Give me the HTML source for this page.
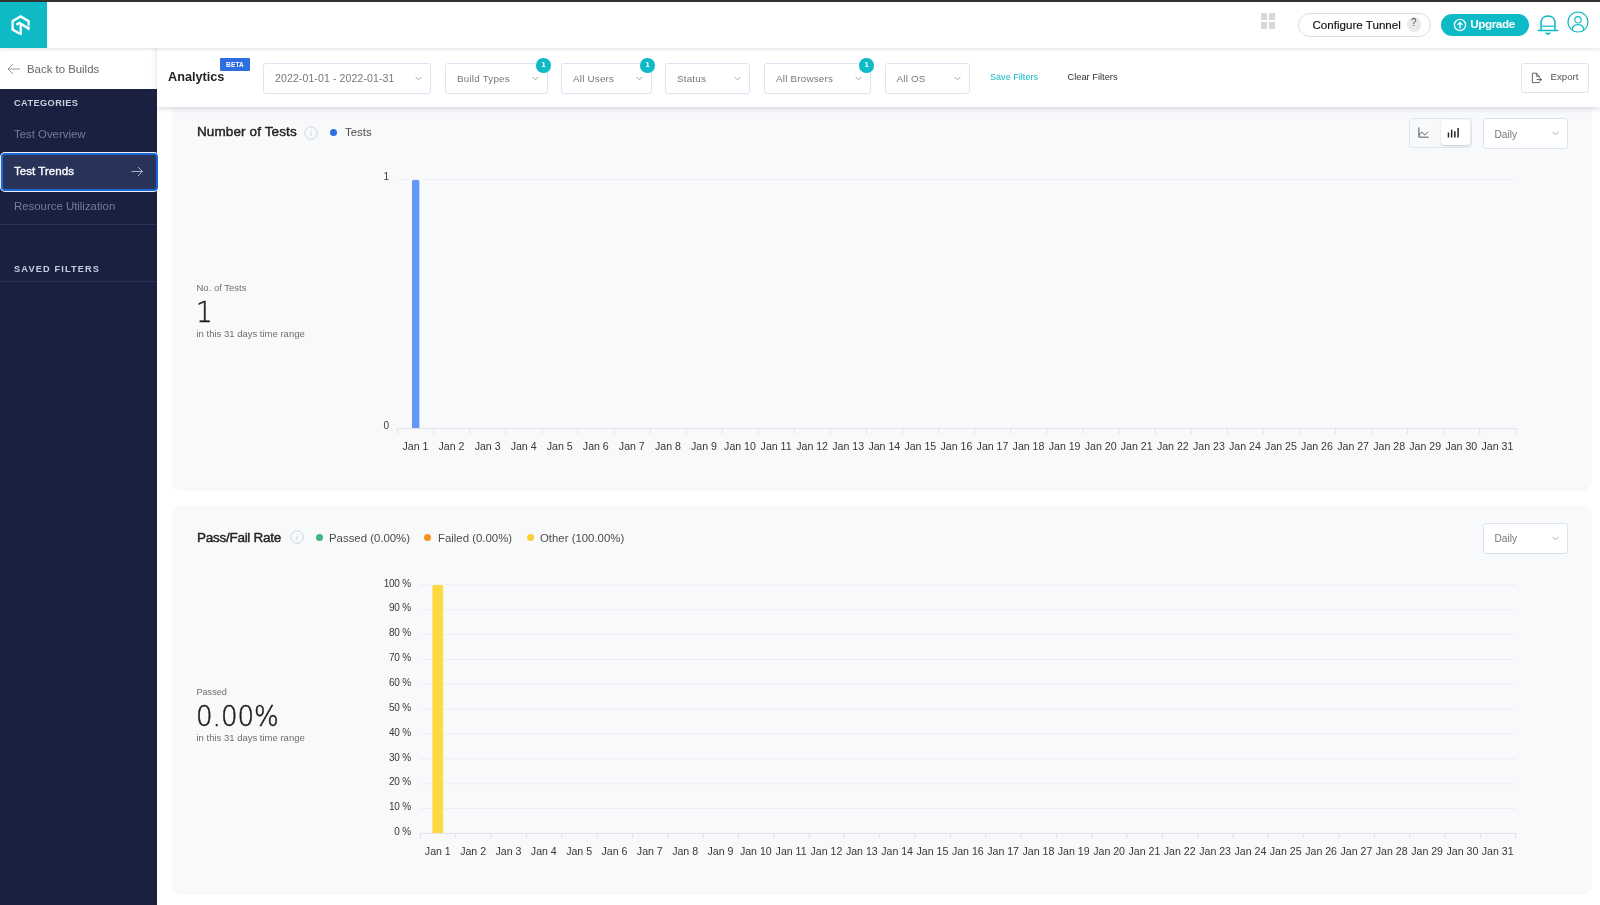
<!DOCTYPE html>
<html lang="en">
<head>
<meta charset="utf-8">
<title>Analytics - Test Trends</title>
<style>
*{box-sizing:border-box;margin:0;padding:0}
html,body{width:1600px;height:905px;overflow:hidden;background:#fff;font-family:"Liberation Sans",sans-serif;color:#333}
#wrap{position:absolute;left:0;top:0;width:1600px;height:905px;will-change:transform}
.abs{position:absolute}
#topline{left:0;top:0;width:1600px;height:2px;background:#333}
#header{left:0;top:2px;width:1600px;height:46px;background:#fff;box-shadow:0 1px 4px rgba(0,0,0,.12);z-index:5}
#logo{left:0;top:0;width:47px;height:46px;background:#0ebac5}
#sidebar{left:0;top:48px;width:157px;height:857px;background:#1a2140;z-index:3}
#back{left:0;top:0;width:157px;height:41px;background:#fff;box-shadow:inset -7px 0 6px -5px rgba(0,0,0,.05);border-right:1px solid #efefef}
#back span{position:absolute;left:27px;top:14.5px;font-size:11.4px;color:#666}
.sb-h{position:absolute;left:14px;font-size:9.2px;font-weight:bold;letter-spacing:.42px;color:#c9cede}
.sb-i{position:absolute;left:14px;font-size:11.4px;color:#747c97}
.sb-line{position:absolute;left:0;width:157px;height:1px;background:#2a3357}
#active{left:.5px;top:105px;width:157.5px;height:38px;background:#283359;border:2px solid #1967d8;border-radius:4px;box-shadow:0 0 0 1px rgba(255,255,255,.92)}
#active span{position:absolute;left:11.5px;top:9px;font-size:11.6px;color:#fff;-webkit-text-stroke:.35px #fff}
#fbar{left:157px;top:48px;width:1443px;height:58.5px;background:#fff;box-shadow:0 2px 5px rgba(30,45,80,.16);z-index:2}
.sel{position:absolute;top:14.5px;height:31.5px;border:1px solid #dde4f1;border-radius:3px;background:#fff;font-size:9.8px;letter-spacing:.22px;color:#777;line-height:29.6px;padding-left:11px;white-space:nowrap}
.badge{position:absolute;width:14.4px;height:14.4px;border-radius:50%;background:#0ebac5;color:#fff;font-size:7.5px;text-align:center;line-height:14.4px;font-weight:bold;margin:.3px 0 0 .3px}
.card{position:absolute;left:172px;width:1420px;background:#f8f9fb;border-radius:10px;z-index:1}
#tunnel{left:1298px;top:11.25px;width:133.25px;height:23.5px;border:1.2px solid #dcdedf;border-radius:12px;background:#fff}
#tunnel span{position:absolute;left:13.5px;top:3.5px;font-size:11.6px;color:#111;-webkit-text-stroke:.15px #111}
#tunnel i{position:absolute;left:107.5px;top:3px;width:14.5px;height:14.5px;border-radius:50%;background:#e9e9e9;font-style:normal;font-size:10px;line-height:12.5px;text-align:center;color:#555}
#upgrade{left:1440.5px;top:11.6px;width:88px;height:22.6px;border-radius:12px;background:#0ebac5}
#upgrade svg{position:absolute;left:12px;top:4.2px}
#upgrade span{position:absolute;left:29.7px;top:3.8px;font-size:11.7px;letter-spacing:-.4px;color:#fff;font-weight:bold}
.chev{position:absolute;right:8px;top:12.4px}
#atitle{left:11px;top:21.5px;font-size:12.7px;font-weight:bold;color:#222}
#beta{left:63px;top:10px;width:30px;height:13px;background:#2f6ee0;color:#fff;font-size:6.5px;font-weight:bold;text-align:center;line-height:13px;border-radius:1px;letter-spacing:.2px}
#savef{left:833px;top:24.1px;font-size:9.1px;color:#0ebac5}
#clearf{left:910.5px;top:24.1px;font-size:9.3px;color:#333}
#export{left:1364px;top:15px;width:68px;height:30px;border:1px solid #dfe5f0;border-radius:3px;background:#fff}
#export svg{position:absolute;left:8.5px;top:7.7px}
#export span{position:absolute;left:28.5px;top:7.2px;font-size:9.7px;color:#555}
.ctitle{position:absolute;font-size:13.5px;letter-spacing:.12px;color:#222;white-space:nowrap;-webkit-text-stroke:.42px #222}
.dot{position:absolute;width:7px;height:7px;border-radius:50%}
.leg{position:absolute;font-size:11.4px;color:#4c4c4c;white-space:nowrap}
.slab{position:absolute;font-size:9.5px;color:#6e6e6e;white-space:nowrap}
.sbig{position:absolute;font-family:"DejaVu Sans","Liberation Sans",sans-serif;font-weight:200;font-size:27.6px;color:#1c1c1c;white-space:nowrap;-webkit-text-stroke:.5px #1c1c1c;transform:scaleX(.945);transform-origin:0 0}
.sel2{position:absolute;width:84.5px;height:31.5px;border:1px solid #dbe2f0;border-radius:3px;background:#fff;font-size:10.1px;color:#777;line-height:31.9px;padding-left:10.5px}
.sel2 .chev{right:8px;top:12px}
#toggle{left:1237px;top:18px;width:63px;height:29.5px;border:1px solid #dfe5f0;border-radius:4px}
#tgl-a{left:30.7px;top:1.2px;width:29.6px;height:25px;background:#fff;border-radius:3.5px;box-shadow:0 1px 2px rgba(0,0,0,.2)}
</style>
</head>
<body>
<div id="wrap">
<div class="abs" id="topline"></div>
<div class="abs" id="header">
  <div class="abs" id="logo">
    <svg class="abs" style="left:0;top:0" width="47" height="46" viewBox="0 0 47 46" fill="none" stroke="#fff" stroke-width="2.4" stroke-linejoin="miter">
      <path d="M28.6 23.4V19.1L20.6 14.5L12.6 19.1V27.6L19.4 31.5"/>
      <path d="M20.7 33V23"/>
      <path d="M16.4 22.7L19.4 21L29.2 26.9"/>
      <path d="M28.7 28.2V24.4" stroke-width="1.6"/>
    </svg>
  </div>
  <svg class="abs" style="left:1261px;top:11px" width="15" height="16" viewBox="0 0 15 16"><g fill="#d6d8d9"><path d="M0 0H4.6Q6.1 0 6.1 1.5V7H0Z"/><path d="M14.1 0H9.5Q8 0 8 1.5V7H14.1Z"/><path d="M0 15.9H4.6Q6.1 15.9 6.1 14.4V8.9H0Z"/><path d="M14.1 15.9H9.5Q8 15.9 8 14.4V8.9H14.1Z"/></g></svg>
  <div class="abs" id="tunnel"><span>Configure Tunnel</span><i>?</i></div>
  <div class="abs" id="upgrade"><svg width="14" height="14" viewBox="0 0 14 14" fill="none" stroke="#fff" stroke-width="1.3"><circle cx="7" cy="7" r="5.6"/><path d="M7 10V4.6M4.8 6.6L7 4.4L9.2 6.6" stroke-linecap="round" stroke-linejoin="round"/></svg><span>Upgrade</span></div>
  <svg class="abs" style="left:1537px;top:10.5px" width="22" height="24" viewBox="0 0 22 24" fill="none" stroke="#0ebac5" stroke-width="1.5"><path d="M4 17.5V10C4 5.4 7 2.9 11 2.9S18 5.4 18 10V17.5"/><path d="M4 13.2H18" stroke-width="1.2"/><path d="M1.2 17.6H20.8" stroke-linecap="round"/><path d="M8.6 20.2H13.4Q11 22.8 8.6 20.2Z" fill="#0ebac5" stroke-width="1"/></svg>
  <svg class="abs" style="left:1567.25px;top:8.5px" width="22" height="22" viewBox="0 0 22 22" fill="none" stroke="#0ebac5" stroke-width="1.2"><circle cx="11" cy="11" r="10"/><circle cx="11" cy="8.8" r="3.2"/><path d="M5.2 19C5.2 14.5 8 13.6 11 13.6S16.8 14.5 16.8 19"/></svg>
</div>
<div class="abs" id="sidebar">
  <div class="abs" id="back"><svg class="abs" style="left:7px;top:15px" width="14" height="12" viewBox="0 0 14 12" fill="none" stroke="#999" stroke-width="1"><path d="M13 6H1.2M6 1L1 6L6 11"/></svg><span>Back to Builds</span></div>
  <div class="sb-h" style="top:50px">CATEGORIES</div>
  <div class="sb-i" style="top:80px">Test Overview</div>
  <div class="abs" id="active"><span>Test Trends</span><svg class="abs" style="left:128.5px;top:11px" width="13" height="11" viewBox="0 0 13 11" fill="none" stroke="#aab1c7" stroke-width="1"><path d="M0.5 5.5H11.5M7 1L11.5 5.5L7 10"/></svg></div>
  <div class="sb-i" style="top:152px">Resource Utilization</div>
  <div class="sb-line" style="top:176px"></div>
  <div class="sb-h" style="top:216px;letter-spacing:1.15px">SAVED FILTERS</div>
  <div class="sb-line" style="top:233px"></div>
</div>
<div class="abs" id="fbar">
  <div class="abs" id="atitle">Analytics</div>
  <div class="abs" id="beta">BETA</div>
  <div class="sel" style="left:106px;width:168px;letter-spacing:.12px;font-size:10.5px;line-height:28.6px">2022-01-01 - 2022-01-31<svg class="chev" width="7" height="5" viewBox="0 0 7 5" fill="none" stroke="#999" stroke-width="0.9"><path d="M0.6 0.9L3.5 3.8L6.4 0.9"/></svg></div>
  <div class="sel" style="left:288px;width:103px">Build Types<svg class="chev" width="7" height="5" viewBox="0 0 7 5" fill="none" stroke="#999" stroke-width="0.9"><path d="M0.6 0.9L3.5 3.8L6.4 0.9"/></svg></div><div class="badge" style="left:379px;top:10px">1</div>
  <div class="sel" style="left:404px;width:90.5px">All Users<svg class="chev" width="7" height="5" viewBox="0 0 7 5" fill="none" stroke="#999" stroke-width="0.9"><path d="M0.6 0.9L3.5 3.8L6.4 0.9"/></svg></div><div class="badge" style="left:483px;top:10px">1</div>
  <div class="sel" style="left:508px;width:85px">Status<svg class="chev" width="7" height="5" viewBox="0 0 7 5" fill="none" stroke="#999" stroke-width="0.9"><path d="M0.6 0.9L3.5 3.8L6.4 0.9"/></svg></div>
  <div class="sel" style="left:607px;width:106.5px">All Browsers<svg class="chev" width="7" height="5" viewBox="0 0 7 5" fill="none" stroke="#999" stroke-width="0.9"><path d="M0.6 0.9L3.5 3.8L6.4 0.9"/></svg></div><div class="badge" style="left:702px;top:10px">1</div>
  <div class="sel" style="left:727.5px;width:85.5px">All OS<svg class="chev" width="7" height="5" viewBox="0 0 7 5" fill="none" stroke="#999" stroke-width="0.9"><path d="M0.6 0.9L3.5 3.8L6.4 0.9"/></svg></div>
  <div class="abs" id="savef">Save Filters</div>
  <div class="abs" id="clearf">Clear Filters</div>
  <div class="abs" id="export"><svg width="12" height="12" viewBox="0 0 12 12" fill="none" stroke="#555" stroke-width="0.9"><path d="M8.3 6V4L5.6 1.2H1.4V10.6H8.3V9.4"/><path d="M5.4 1.4V4.2H8.2"/><path d="M5.6 7.6H10.4"/><path d="M9.2 6.3L10.8 7.6L9.2 8.9Z" fill="#555" stroke-width=".5"/></svg><span>Export</span></div>
</div>
<div class="card" id="card1" style="top:100px;height:391px">
<svg class="abs" style="left:0;top:0" width="1420" height="391" viewBox="172 100 1420 391" font-family="Liberation Sans, sans-serif">
<line x1="397.7" y1="179.6" x2="1515.7" y2="179.6" stroke="#eceef2" stroke-width="1"/>
<line x1="397.7" y1="428.5" x2="1515.7" y2="428.5" stroke="#e1e3e7" stroke-width="1"/>
<line x1="397.7" y1="428" x2="397.7" y2="434" stroke="#e1e3e7" stroke-width="1"/>
<line x1="433.8" y1="428" x2="433.8" y2="434" stroke="#e1e3e7" stroke-width="1"/>
<line x1="469.8" y1="428" x2="469.8" y2="434" stroke="#e1e3e7" stroke-width="1"/>
<line x1="505.9" y1="428" x2="505.9" y2="434" stroke="#e1e3e7" stroke-width="1"/>
<line x1="542.0" y1="428" x2="542.0" y2="434" stroke="#e1e3e7" stroke-width="1"/>
<line x1="578.0" y1="428" x2="578.0" y2="434" stroke="#e1e3e7" stroke-width="1"/>
<line x1="614.1" y1="428" x2="614.1" y2="434" stroke="#e1e3e7" stroke-width="1"/>
<line x1="650.2" y1="428" x2="650.2" y2="434" stroke="#e1e3e7" stroke-width="1"/>
<line x1="686.2" y1="428" x2="686.2" y2="434" stroke="#e1e3e7" stroke-width="1"/>
<line x1="722.3" y1="428" x2="722.3" y2="434" stroke="#e1e3e7" stroke-width="1"/>
<line x1="758.3" y1="428" x2="758.3" y2="434" stroke="#e1e3e7" stroke-width="1"/>
<line x1="794.4" y1="428" x2="794.4" y2="434" stroke="#e1e3e7" stroke-width="1"/>
<line x1="830.5" y1="428" x2="830.5" y2="434" stroke="#e1e3e7" stroke-width="1"/>
<line x1="866.5" y1="428" x2="866.5" y2="434" stroke="#e1e3e7" stroke-width="1"/>
<line x1="902.6" y1="428" x2="902.6" y2="434" stroke="#e1e3e7" stroke-width="1"/>
<line x1="938.7" y1="428" x2="938.7" y2="434" stroke="#e1e3e7" stroke-width="1"/>
<line x1="974.7" y1="428" x2="974.7" y2="434" stroke="#e1e3e7" stroke-width="1"/>
<line x1="1010.8" y1="428" x2="1010.8" y2="434" stroke="#e1e3e7" stroke-width="1"/>
<line x1="1046.9" y1="428" x2="1046.9" y2="434" stroke="#e1e3e7" stroke-width="1"/>
<line x1="1082.9" y1="428" x2="1082.9" y2="434" stroke="#e1e3e7" stroke-width="1"/>
<line x1="1119.0" y1="428" x2="1119.0" y2="434" stroke="#e1e3e7" stroke-width="1"/>
<line x1="1155.1" y1="428" x2="1155.1" y2="434" stroke="#e1e3e7" stroke-width="1"/>
<line x1="1191.1" y1="428" x2="1191.1" y2="434" stroke="#e1e3e7" stroke-width="1"/>
<line x1="1227.2" y1="428" x2="1227.2" y2="434" stroke="#e1e3e7" stroke-width="1"/>
<line x1="1263.2" y1="428" x2="1263.2" y2="434" stroke="#e1e3e7" stroke-width="1"/>
<line x1="1299.3" y1="428" x2="1299.3" y2="434" stroke="#e1e3e7" stroke-width="1"/>
<line x1="1335.4" y1="428" x2="1335.4" y2="434" stroke="#e1e3e7" stroke-width="1"/>
<line x1="1371.4" y1="428" x2="1371.4" y2="434" stroke="#e1e3e7" stroke-width="1"/>
<line x1="1407.5" y1="428" x2="1407.5" y2="434" stroke="#e1e3e7" stroke-width="1"/>
<line x1="1443.6" y1="428" x2="1443.6" y2="434" stroke="#e1e3e7" stroke-width="1"/>
<line x1="1479.6" y1="428" x2="1479.6" y2="434" stroke="#e1e3e7" stroke-width="1"/>
<line x1="1515.7" y1="428" x2="1515.7" y2="434" stroke="#e1e3e7" stroke-width="1"/>
<path d="M412 428V181.5Q412 180 413.5 180H417.9Q419.4 180 419.4 181.5V428Z" fill="#6398f5"/>
<text x="389" y="180" font-size="10" fill="#383838" text-anchor="end">1</text>
<text x="389" y="429" font-size="10" fill="#383838" text-anchor="end">0</text>
<text x="415.4" y="450" font-size="10.6" fill="#383838" text-anchor="middle">Jan 1</text>
<text x="451.5" y="450" font-size="10.6" fill="#383838" text-anchor="middle">Jan 2</text>
<text x="487.6" y="450" font-size="10.6" fill="#383838" text-anchor="middle">Jan 3</text>
<text x="523.6" y="450" font-size="10.6" fill="#383838" text-anchor="middle">Jan 4</text>
<text x="559.7" y="450" font-size="10.6" fill="#383838" text-anchor="middle">Jan 5</text>
<text x="595.8" y="450" font-size="10.6" fill="#383838" text-anchor="middle">Jan 6</text>
<text x="631.8" y="450" font-size="10.6" fill="#383838" text-anchor="middle">Jan 7</text>
<text x="667.9" y="450" font-size="10.6" fill="#383838" text-anchor="middle">Jan 8</text>
<text x="703.9" y="450" font-size="10.6" fill="#383838" text-anchor="middle">Jan 9</text>
<text x="740.0" y="450" font-size="10.6" fill="#383838" text-anchor="middle">Jan 10</text>
<text x="776.1" y="450" font-size="10.6" fill="#383838" text-anchor="middle">Jan 11</text>
<text x="812.1" y="450" font-size="10.6" fill="#383838" text-anchor="middle">Jan 12</text>
<text x="848.2" y="450" font-size="10.6" fill="#383838" text-anchor="middle">Jan 13</text>
<text x="884.3" y="450" font-size="10.6" fill="#383838" text-anchor="middle">Jan 14</text>
<text x="920.3" y="450" font-size="10.6" fill="#383838" text-anchor="middle">Jan 15</text>
<text x="956.4" y="450" font-size="10.6" fill="#383838" text-anchor="middle">Jan 16</text>
<text x="992.5" y="450" font-size="10.6" fill="#383838" text-anchor="middle">Jan 17</text>
<text x="1028.5" y="450" font-size="10.6" fill="#383838" text-anchor="middle">Jan 18</text>
<text x="1064.6" y="450" font-size="10.6" fill="#383838" text-anchor="middle">Jan 19</text>
<text x="1100.7" y="450" font-size="10.6" fill="#383838" text-anchor="middle">Jan 20</text>
<text x="1136.7" y="450" font-size="10.6" fill="#383838" text-anchor="middle">Jan 21</text>
<text x="1172.8" y="450" font-size="10.6" fill="#383838" text-anchor="middle">Jan 22</text>
<text x="1208.9" y="450" font-size="10.6" fill="#383838" text-anchor="middle">Jan 23</text>
<text x="1244.9" y="450" font-size="10.6" fill="#383838" text-anchor="middle">Jan 24</text>
<text x="1281.0" y="450" font-size="10.6" fill="#383838" text-anchor="middle">Jan 25</text>
<text x="1317.0" y="450" font-size="10.6" fill="#383838" text-anchor="middle">Jan 26</text>
<text x="1353.1" y="450" font-size="10.6" fill="#383838" text-anchor="middle">Jan 27</text>
<text x="1389.2" y="450" font-size="10.6" fill="#383838" text-anchor="middle">Jan 28</text>
<text x="1425.2" y="450" font-size="10.6" fill="#383838" text-anchor="middle">Jan 29</text>
<text x="1461.3" y="450" font-size="10.6" fill="#383838" text-anchor="middle">Jan 30</text>
<text x="1497.4" y="450" font-size="10.6" fill="#383838" text-anchor="middle">Jan 31</text>
</svg>
  <div class="ctitle" style="left:25px;top:24px">Number of Tests</div>
  <svg class="abs info" style="left:132px;top:26px" width="14" height="14" viewBox="0 0 14 14" fill="none" stroke="#cfd3da" stroke-width="1"><circle cx="7" cy="7" r="6.2"/><path d="M7 6.2V10M7 3.9V4.9"/></svg>
  <div class="dot" style="left:158px;top:28.8px;background:#2f6ee0"></div><div class="leg" style="left:173px;top:26px">Tests</div>
  <div class="abs" id="toggle">
    <svg class="abs" style="left:7.5px;top:8px" width="11.5" height="11.5" viewBox="0 0 13 13" fill="none" stroke="#444" stroke-width="1"><path d="M1 0.5V11.5H12"/><path d="M1.5 9.5C3 5.5 4.5 5 6 7.5S9 8.5 11 5.5"/></svg>
    <div class="abs" id="tgl-a"><svg class="abs" style="left:6px;top:7px" width="13" height="11" viewBox="0 0 14 12" fill="none" stroke="#222" stroke-width="1.6"><path d="M1.5 11.5V6M5 11.5V3M8.5 11.5V4.5M12 11.5V1"/></svg></div>
  </div>
  <div class="sel2" style="left:1311px;top:17.5px">Daily<svg class="chev" width="7" height="5" viewBox="0 0 7 5" fill="none" stroke="#999" stroke-width="0.9"><path d="M0.6 0.9L3.5 3.8L6.4 0.9"/></svg></div>
  <div class="slab" style="left:24.5px;top:182.3px">No. of Tests</div>
  <div class="sbig" style="left:24px;top:195.9px">1</div>
  <div class="slab" style="left:24.5px;top:228.3px">in this 31 days time range</div>
</div>
<div class="card" id="card2" style="top:506px;height:389px">
<svg class="abs" style="left:0;top:0" width="1420" height="389" viewBox="172 506 1420 389" font-family="Liberation Sans, sans-serif">
<line x1="420.4" y1="584.9" x2="1515.7" y2="584.9" stroke="#eceef2" stroke-width="1"/>
<text x="411" y="586.5" font-size="10" letter-spacing="-.2" fill="#383838" text-anchor="end">100 %</text>
<line x1="420.4" y1="609.8" x2="1515.7" y2="609.8" stroke="#eceef2" stroke-width="1"/>
<text x="411" y="611.4" font-size="10" letter-spacing="-.2" fill="#383838" text-anchor="end">90 %</text>
<line x1="420.4" y1="634.6" x2="1515.7" y2="634.6" stroke="#eceef2" stroke-width="1"/>
<text x="411" y="636.2" font-size="10" letter-spacing="-.2" fill="#383838" text-anchor="end">80 %</text>
<line x1="420.4" y1="659.5" x2="1515.7" y2="659.5" stroke="#eceef2" stroke-width="1"/>
<text x="411" y="661.1" font-size="10" letter-spacing="-.2" fill="#383838" text-anchor="end">70 %</text>
<line x1="420.4" y1="684.3" x2="1515.7" y2="684.3" stroke="#eceef2" stroke-width="1"/>
<text x="411" y="685.9" font-size="10" letter-spacing="-.2" fill="#383838" text-anchor="end">60 %</text>
<line x1="420.4" y1="709.2" x2="1515.7" y2="709.2" stroke="#eceef2" stroke-width="1"/>
<text x="411" y="710.8" font-size="10" letter-spacing="-.2" fill="#383838" text-anchor="end">50 %</text>
<line x1="420.4" y1="734.1" x2="1515.7" y2="734.1" stroke="#eceef2" stroke-width="1"/>
<text x="411" y="735.7" font-size="10" letter-spacing="-.2" fill="#383838" text-anchor="end">40 %</text>
<line x1="420.4" y1="758.9" x2="1515.7" y2="758.9" stroke="#eceef2" stroke-width="1"/>
<text x="411" y="760.5" font-size="10" letter-spacing="-.2" fill="#383838" text-anchor="end">30 %</text>
<line x1="420.4" y1="783.8" x2="1515.7" y2="783.8" stroke="#eceef2" stroke-width="1"/>
<text x="411" y="785.4" font-size="10" letter-spacing="-.2" fill="#383838" text-anchor="end">20 %</text>
<line x1="420.4" y1="808.6" x2="1515.7" y2="808.6" stroke="#eceef2" stroke-width="1"/>
<text x="411" y="810.2" font-size="10" letter-spacing="-.2" fill="#383838" text-anchor="end">10 %</text>
<line x1="420.4" y1="833.5" x2="1515.7" y2="833.5" stroke="#e1e3e7" stroke-width="1"/>
<text x="411" y="835.1" font-size="10" letter-spacing="-.2" fill="#383838" text-anchor="end">0 %</text>
<line x1="420.4" y1="833" x2="420.4" y2="839" stroke="#e1e3e7" stroke-width="1"/>
<line x1="455.7" y1="833" x2="455.7" y2="839" stroke="#e1e3e7" stroke-width="1"/>
<line x1="491.1" y1="833" x2="491.1" y2="839" stroke="#e1e3e7" stroke-width="1"/>
<line x1="526.4" y1="833" x2="526.4" y2="839" stroke="#e1e3e7" stroke-width="1"/>
<line x1="561.7" y1="833" x2="561.7" y2="839" stroke="#e1e3e7" stroke-width="1"/>
<line x1="597.1" y1="833" x2="597.1" y2="839" stroke="#e1e3e7" stroke-width="1"/>
<line x1="632.4" y1="833" x2="632.4" y2="839" stroke="#e1e3e7" stroke-width="1"/>
<line x1="667.7" y1="833" x2="667.7" y2="839" stroke="#e1e3e7" stroke-width="1"/>
<line x1="703.1" y1="833" x2="703.1" y2="839" stroke="#e1e3e7" stroke-width="1"/>
<line x1="738.4" y1="833" x2="738.4" y2="839" stroke="#e1e3e7" stroke-width="1"/>
<line x1="773.7" y1="833" x2="773.7" y2="839" stroke="#e1e3e7" stroke-width="1"/>
<line x1="809.1" y1="833" x2="809.1" y2="839" stroke="#e1e3e7" stroke-width="1"/>
<line x1="844.4" y1="833" x2="844.4" y2="839" stroke="#e1e3e7" stroke-width="1"/>
<line x1="879.7" y1="833" x2="879.7" y2="839" stroke="#e1e3e7" stroke-width="1"/>
<line x1="915.1" y1="833" x2="915.1" y2="839" stroke="#e1e3e7" stroke-width="1"/>
<line x1="950.4" y1="833" x2="950.4" y2="839" stroke="#e1e3e7" stroke-width="1"/>
<line x1="985.7" y1="833" x2="985.7" y2="839" stroke="#e1e3e7" stroke-width="1"/>
<line x1="1021.0" y1="833" x2="1021.0" y2="839" stroke="#e1e3e7" stroke-width="1"/>
<line x1="1056.4" y1="833" x2="1056.4" y2="839" stroke="#e1e3e7" stroke-width="1"/>
<line x1="1091.7" y1="833" x2="1091.7" y2="839" stroke="#e1e3e7" stroke-width="1"/>
<line x1="1127.0" y1="833" x2="1127.0" y2="839" stroke="#e1e3e7" stroke-width="1"/>
<line x1="1162.4" y1="833" x2="1162.4" y2="839" stroke="#e1e3e7" stroke-width="1"/>
<line x1="1197.7" y1="833" x2="1197.7" y2="839" stroke="#e1e3e7" stroke-width="1"/>
<line x1="1233.0" y1="833" x2="1233.0" y2="839" stroke="#e1e3e7" stroke-width="1"/>
<line x1="1268.4" y1="833" x2="1268.4" y2="839" stroke="#e1e3e7" stroke-width="1"/>
<line x1="1303.7" y1="833" x2="1303.7" y2="839" stroke="#e1e3e7" stroke-width="1"/>
<line x1="1339.0" y1="833" x2="1339.0" y2="839" stroke="#e1e3e7" stroke-width="1"/>
<line x1="1374.4" y1="833" x2="1374.4" y2="839" stroke="#e1e3e7" stroke-width="1"/>
<line x1="1409.7" y1="833" x2="1409.7" y2="839" stroke="#e1e3e7" stroke-width="1"/>
<line x1="1445.0" y1="833" x2="1445.0" y2="839" stroke="#e1e3e7" stroke-width="1"/>
<line x1="1480.4" y1="833" x2="1480.4" y2="839" stroke="#e1e3e7" stroke-width="1"/>
<line x1="1515.7" y1="833" x2="1515.7" y2="839" stroke="#e1e3e7" stroke-width="1"/>
<path d="M432.4 833V586.5Q432.4 585 433.9 585H441.6Q443.1 585 443.1 586.5V833Z" fill="#fdd942"/>
<text x="437.8" y="855" font-size="10.6" fill="#383838" text-anchor="middle">Jan 1</text>
<text x="473.1" y="855" font-size="10.6" fill="#383838" text-anchor="middle">Jan 2</text>
<text x="508.4" y="855" font-size="10.6" fill="#383838" text-anchor="middle">Jan 3</text>
<text x="543.8" y="855" font-size="10.6" fill="#383838" text-anchor="middle">Jan 4</text>
<text x="579.1" y="855" font-size="10.6" fill="#383838" text-anchor="middle">Jan 5</text>
<text x="614.4" y="855" font-size="10.6" fill="#383838" text-anchor="middle">Jan 6</text>
<text x="649.8" y="855" font-size="10.6" fill="#383838" text-anchor="middle">Jan 7</text>
<text x="685.1" y="855" font-size="10.6" fill="#383838" text-anchor="middle">Jan 8</text>
<text x="720.4" y="855" font-size="10.6" fill="#383838" text-anchor="middle">Jan 9</text>
<text x="755.8" y="855" font-size="10.6" fill="#383838" text-anchor="middle">Jan 10</text>
<text x="791.1" y="855" font-size="10.6" fill="#383838" text-anchor="middle">Jan 11</text>
<text x="826.4" y="855" font-size="10.6" fill="#383838" text-anchor="middle">Jan 12</text>
<text x="861.8" y="855" font-size="10.6" fill="#383838" text-anchor="middle">Jan 13</text>
<text x="897.1" y="855" font-size="10.6" fill="#383838" text-anchor="middle">Jan 14</text>
<text x="932.4" y="855" font-size="10.6" fill="#383838" text-anchor="middle">Jan 15</text>
<text x="967.8" y="855" font-size="10.6" fill="#383838" text-anchor="middle">Jan 16</text>
<text x="1003.1" y="855" font-size="10.6" fill="#383838" text-anchor="middle">Jan 17</text>
<text x="1038.4" y="855" font-size="10.6" fill="#383838" text-anchor="middle">Jan 18</text>
<text x="1073.7" y="855" font-size="10.6" fill="#383838" text-anchor="middle">Jan 19</text>
<text x="1109.1" y="855" font-size="10.6" fill="#383838" text-anchor="middle">Jan 20</text>
<text x="1144.4" y="855" font-size="10.6" fill="#383838" text-anchor="middle">Jan 21</text>
<text x="1179.7" y="855" font-size="10.6" fill="#383838" text-anchor="middle">Jan 22</text>
<text x="1215.1" y="855" font-size="10.6" fill="#383838" text-anchor="middle">Jan 23</text>
<text x="1250.4" y="855" font-size="10.6" fill="#383838" text-anchor="middle">Jan 24</text>
<text x="1285.7" y="855" font-size="10.6" fill="#383838" text-anchor="middle">Jan 25</text>
<text x="1321.1" y="855" font-size="10.6" fill="#383838" text-anchor="middle">Jan 26</text>
<text x="1356.4" y="855" font-size="10.6" fill="#383838" text-anchor="middle">Jan 27</text>
<text x="1391.7" y="855" font-size="10.6" fill="#383838" text-anchor="middle">Jan 28</text>
<text x="1427.1" y="855" font-size="10.6" fill="#383838" text-anchor="middle">Jan 29</text>
<text x="1462.4" y="855" font-size="10.6" fill="#383838" text-anchor="middle">Jan 30</text>
<text x="1497.7" y="855" font-size="10.6" fill="#383838" text-anchor="middle">Jan 31</text>
</svg>
  <div class="ctitle" style="left:25px;top:23.5px;letter-spacing:-.27px">Pass/Fail Rate</div>
  <svg class="abs info" style="left:118px;top:24px" width="14" height="14" viewBox="0 0 14 14" fill="none" stroke="#cfd3da" stroke-width="1"><circle cx="7" cy="7" r="6.2"/><path d="M7 6.2V10M7 3.9V4.9"/></svg>
  <div class="dot" style="left:143.5px;top:28px;background:#3fb57f"></div><div class="leg" style="left:157px;top:25.5px">Passed (0.00%)</div>
  <div class="dot" style="left:251.5px;top:28px;background:#f7941d"></div><div class="leg" style="left:266px;top:25.5px">Failed (0.00%)</div>
  <div class="dot" style="left:354.5px;top:28px;background:#fccf2f"></div><div class="leg" style="left:368px;top:25.5px">Other (100.00%)</div>
  <div class="sel2" style="left:1311px;top:16.75px;line-height:29.3px">Daily<svg class="chev" width="7" height="5" viewBox="0 0 7 5" fill="none" stroke="#999" stroke-width="0.9"><path d="M0.6 0.9L3.5 3.8L6.4 0.9"/></svg></div>
  <div class="slab" style="left:24.5px;top:181.2px;font-size:9.1px">Passed</div>
  <div class="sbig" style="left:24px;top:193.8px">0.00%</div>
  <div class="slab" style="left:24.5px;top:226.3px">in this 31 days time range</div>
</div>
</div>
</body>
</html>
